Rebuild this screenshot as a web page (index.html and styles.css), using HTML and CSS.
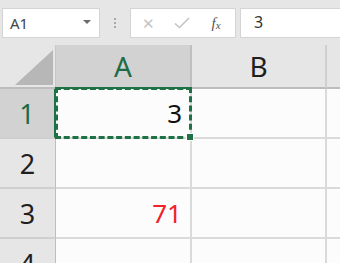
FILE: index.html
```html
<html>
<head>
  <title>Sheet</title>
  <link rel="stylesheet" href="styles.css">
</head>
<body>
<!-- строка формул -->
<div class="formula-bar">
  <div class="name-box">
    <span class="name-text">A1</span>
    <span class="name-arrow"></span>
  </div>
  <div class="grip"><i></i><i></i><i></i></div>
  <div class="func-box">
    <span class="fb-btn fb-cancel">&#x2715;</span>
    <span class="fb-btn fb-ok">
      <svg width="16" height="12" viewBox="0 0 16 12"><path d="M1 6.5 L5.5 10.5 L15 1" fill="none" stroke="#c4c4c4" stroke-width="1.6"/></svg>
    </span>
    <span class="fb-btn fb-fx"><i>f</i><i class="x">x</i></span>
  </div>
  <div class="formula-input">3</div>
</div>

<!-- таблица -->
<div class="sheet">
  <div class="corner">
    <svg width="56" height="43" viewBox="0 0 56 43"><polygon points="15,40 53,40 53,5" fill="#b7b7b7"/></svg>
  </div>
  <div class="col-head selected">A</div>
  <div class="col-head">B</div>
  <div class="col-head last"></div>

  <div class="row-head selected">1</div>
  <div class="cell active"><span>3</span><div class="marquee"></div><div class="handle"></div></div>
  <div class="cell"></div>
  <div class="cell last"></div>

  <div class="row-head">2</div>
  <div class="cell"></div>
  <div class="cell"></div>
  <div class="cell last"></div>

  <div class="row-head">3</div>
  <div class="cell red">71</div>
  <div class="cell"></div>
  <div class="cell last"></div>

  <div class="row-head">4</div>
  <div class="cell"></div>
  <div class="cell"></div>
  <div class="cell last"></div>
</div>
</body>
</html>
```

FILE: styles.css
```css
body {
  margin: 0;
  padding: 0;
  background-color: #e6e6e6;
  font-family: "Noto Sans", "Open Sans", sans-serif;
  overflow: hidden;
}

.formula-bar {
  display: flex;
  align-items: center;
  height: 45px;
  padding-left: 2px;
  box-sizing: border-box;
  padding-top: 1px;
}

.name-box {
  width: 98px;
  height: 30px;
  box-sizing: border-box;
  background: #fff;
  border: 1px solid #d4d4d4;
  display: flex;
  align-items: center;
  justify-content: space-between;
  padding: 0 8px 0 7px;
}

.name-text {
  font-size: 15px;
  color: #444;
}

.name-arrow {
  width: 0;
  height: 0;
  border-left: 4px solid transparent;
  border-right: 4px solid transparent;
  border-top: 4px solid #6a6a6a;
  margin-top: -2px;
}

.grip {
  width: 30px;
  display: flex;
  flex-direction: column;
  align-items: center;
  gap: 2px;
}

.grip i {
  width: 2px;
  height: 2px;
  background: #a8a8a8;
}

.func-box {
  width: 106px;
  height: 30px;
  box-sizing: border-box;
  background: #fff;
  border: 1px solid #d4d4d4;
  display: flex;
  align-items: center;
}

.fb-btn {
  width: 34px;
  text-align: center;
  color: #c4c4c4;
  display: flex;
  justify-content: center;
}

.fb-cancel {
  font-size: 15px;
}

.fb-fx {
  font-family: "Liberation Serif", serif;
  font-size: 15px;
  color: #555;
}

.fb-fx .x {
  font-size: 11px;
  margin-top: 4px;
}

.formula-input {
  flex: 1;
  height: 30px;
  box-sizing: border-box;
  margin-left: 4px;
  background: #fff;
  border: 1px solid #d4d4d4;
  border-right: none;
  font-size: 16px;
  color: #333;
  padding-left: 13px;
  line-height: 27px;
}

.sheet {
  display: grid;
  grid-template-columns: 56px 136px 135px 1fr;
  grid-template-rows: 44px 50px 50px 50px 50px;
}

.corner {
  border-right: 1px solid #c8c8c8;
  border-bottom: 2px solid #bdbdbd;
  box-sizing: border-box;
  height: 44px;
}

.corner svg {
  display: block;
}

.col-head {
  box-sizing: border-box;
  border-right: 2px solid #cfcfcf;
  border-bottom: 2px solid #bdbdbd;
  display: flex;
  align-items: center;
  justify-content: center;
  font-size: 28px;
  color: #1f1f1f;
}

.col-head.selected {
  background: #d2d2d2;
  color: #1e6b45;
  border-right-color: #c0c0c0;
  border-bottom-color: #1e7145;
}

.col-head.last {
  border-right: none;
}

.row-head {
  box-sizing: border-box;
  border-right: 1px solid #bdbdbd;
  border-bottom: 2px solid #cfcfcf;
  display: flex;
  align-items: center;
  justify-content: center;
  font-size: 27px;
  color: #1f1f1f;
}

.row-head.selected {
  background: #d2d2d2;
  color: #1e6b45;
  border-right: 2px solid #1e7145;
}

.cell {
  box-sizing: border-box;
  background: #fcfcfc;
  border-right: 2px solid #dadada;
  border-bottom: 2px solid #dadada;
  display: flex;
  align-items: center;
  justify-content: flex-end;
  padding-right: 8px;
  font-size: 26px;
  color: #111;
}

.cell.last {
  border-right: none;
}

.cell.red {
  color: #f0222a;
}

.cell.active {
  position: relative;
}

/* пунктирная рамка выделения */
.marquee {
  position: absolute;
  left: -1px;
  top: -2px;
  right: -2px;
  bottom: -2px;
  border: 3px dashed #1e7145;
}

.handle {
  position: absolute;
  right: -4px;
  bottom: -4px;
  width: 6px;
  height: 6px;
  background: #1e7145;
  border: 1px solid #fff;
}
```
